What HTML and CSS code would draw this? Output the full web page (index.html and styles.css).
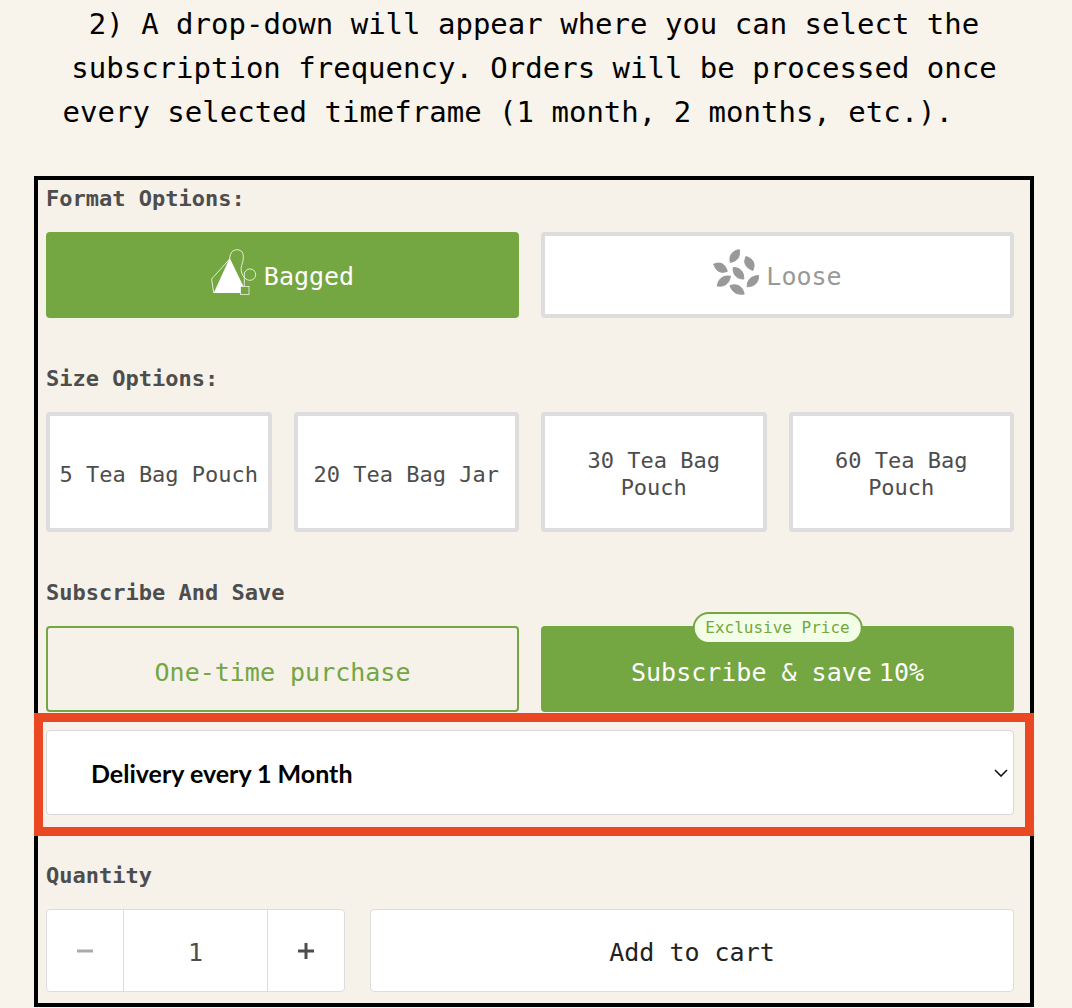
FILE: index.html
```html
<!DOCTYPE html>
<html lang="en">
<head>
    <meta charset="UTF-8">
    <meta name="viewport" content="width=device-width, initial-scale=1.0">
    <title>How to subscribe</title>
    <link rel="stylesheet" href="styles.css">
</head>
<body>
    <p class="intro">2) A drop-down will appear where you can select the subscription frequency. Orders will be processed once every selected timeframe (1 month, 2 months, etc.).&nbsp;&nbsp;&nbsp;</p>

    <form class="panel">
        <section class="group">
            <h2 class="label">Format Options:</h2>
            <div class="row">
                <button type="button" class="option format active" aria-pressed="true">
                    <svg class="icon" viewBox="0 0 46 46" aria-hidden="true">
                        <path d="M18.7 9L2.7 44H30V37.5H32.5Z" fill="currentColor"/>
                        <path d="M18.7 10L.6 30L2.7 44M18.7 10C19 3 22 .8 26 .8C31 .8 32.5 4 32.3 9C32 15 29 18 30.5 23C32 28 35 31.3 39 31.3A5.7 5.7 0 1 0 33.3 25.6V37.5" fill="none" stroke="currentColor" stroke-width=".8"/>
                        <rect x="29.5" y="37.5" width="8.5" height="8" fill="#74a642" stroke="currentColor" stroke-width=".7"/>
                    </svg>
                    <span>Bagged</span>
                </button>
                <button type="button" class="option format muted" aria-pressed="false">
                    <svg class="icon" viewBox="0 0 46 46" fill="currentColor" stroke="currentColor" stroke-linejoin="round" aria-hidden="true">
                        <path d="M26.3 .7C20 1.5 15.5 6 17.3 13.3C24 12.5 27.5 8 26.3 .7Z"/>
                        <path d="M33 7.5C40 9.5 43 15 39.8 21.5C32.5 18.5 30 14 33 7.5Z"/>
                        <path d="M.7 15.2C7 12.5 12 14.5 14.3 22.3C7.5 25 3 22 .7 15.2Z"/>
                        <path d="M20.2 18.5C27 18.5 31 22.5 30.8 30C24 30 19.5 26 20.2 18.5Z"/>
                        <path d="M17.5 27.3C11 26 5.5 29 4.2 37C11.5 38 16 35 17.5 27.3Z"/>
                        <path d="M45.4 26.5C38.5 27 34 30.5 34.2 37.8C41.5 37.5 46 33.5 45.4 26.5Z"/>
                        <path d="M17 36.5C24 34.5 29.5 37 31.2 45C24.5 46 19.5 44 17 36.5Z"/>
                    </svg>
                    <span>Loose</span>
                </button>
            </div>
        </section>

        <section class="group">
            <h2 class="label">Size Options:</h2>
            <div class="row">
                <button type="button" class="option size">5 Tea Bag Pouch</button>
                <button type="button" class="option size">20 Tea Bag Jar</button>
                <button type="button" class="option size">30 Tea Bag Pouch</button>
                <button type="button" class="option size">60 Tea Bag Pouch</button>
            </div>
        </section>

        <section class="group">
            <h2 class="label">Subscribe And Save</h2>
            <div class="row">
                <button type="button" class="option plan">One-time purchase</button>
                <button type="button" class="option plan active">
                    <span class="badge">Exclusive Price</span>
                    <span>Subscribe &amp; save</span>
                    <span>10%</span>
                </button>
            </div>
        </section>

        <div class="highlight">
            <div class="select-wrap">
                <select class="frequency" aria-label="Delivery frequency">
                    <option>Delivery every 1 Month</option>
                    <option>Delivery every 2 Months</option>
                    <option>Delivery every 3 Months</option>
                </select>
                <svg class="chevron" viewBox="0 0 14 8" aria-hidden="true">
                    <path d="M1 1L7 7L13 1" fill="none" stroke="currentColor" stroke-width="1.6"/>
                </svg>
            </div>
        </div>

        <section>
            <label class="label" for="quantity">Quantity</label>
            <div class="buy">
                <div class="stepper">
                    <button type="button" class="step minus" aria-label="Decrease">
                        <svg viewBox="0 0 16 16" aria-hidden="true"><path d="M0 8H16" stroke="currentColor" stroke-width="3"/></svg>
                    </button>
                    <input id="quantity" class="count" type="text" inputmode="numeric" value="1">
                    <button type="button" class="step" aria-label="Increase">
                        <svg viewBox="0 0 16 16" aria-hidden="true"><path d="M0 8H16M8 0V16" stroke="currentColor" stroke-width="3"/></svg>
                    </button>
                </div>
                <button type="button" class="cart">Add to cart</button>
            </div>
        </section>
    </form>
</body>
</html>
```
FILE: styles.css
```css
* {
    box-sizing: border-box;
}
body {
    margin: 0;
    padding: 2px 38px 0 34px;
    background-color: #f8f3eb;
    color: #000;
    font-family: "DejaVu Sans Mono", monospace;
}
button, input {
    margin: 0;
    padding: 0;
    font-family: inherit;
    color: inherit;
}
button {
    cursor: pointer;
}
.intro {
    margin: 0 0 42px;
    font-size: 29px;
    line-height: 44px;
    text-align: center;
}
.panel {
    padding: 5px 16px 11px 8px;
    border: 4px solid #000;
    background-color: #f6f1e9;
    color: #4d4d4d;
}
.group {
    margin-bottom: 47px;
}
.label {
    display: block;
    margin: 0 0 19px;
    font-size: 22px;
    font-weight: bold;
    line-height: 28px;
}
.row {
    display: flex;
    gap: 22px;
}
.option {
    flex: 1 1 0;
    display: flex;
    justify-content: center;
    align-items: center;
    gap: 7px;
    min-width: 0;
    padding: 4px 8px 0;
    border: 4px solid #ddd;
    border-radius: 4px;
    background-color: #fff;
}
.format, .plan {
    height: 86px;
    font-size: 25px;
    line-height: 32px;
}
.size {
    height: 120px;
    font-size: 22px;
    line-height: 27px;
}
.plan {
    position: relative;
    padding-top: 8px;
    border: 2px solid #74a642;
    background-color: transparent;
    color: #74a642;
}
.active {
    border-color: #74a642;
    background-color: #74a642;
    color: #fff;
}
.muted {
    color: #999;
}
.icon {
    width: 46px;
    height: 46px;
    margin-bottom: 11px;
}
.badge {
    position: absolute;
    top: -16px;
    left: 50%;
    transform: translateX(-50%);
    padding: 0 11px;
    border: 2px solid #74a642;
    border-radius: 16px;
    background-color: #f2ffe6;
    color: #74a642;
    font-size: 16px;
    line-height: 28px;
    white-space: nowrap;
}
/* spans the panel edge to edge, over its black border */
.highlight {
    margin: -46px -20px 26px -12px;
    padding: 8px 11px 12px 3px;
    border: 9px solid #e94822;
}
.select-wrap {
    position: relative;
}
.frequency {
    display: block;
    width: 100%;
    height: 85px;
    padding: 0 44px;
    border: 1px solid #d9d9d9;
    border-radius: 4px;
    background-color: #fff;
    color: #000;
    font-family: Lato, sans-serif;
    font-size: 25px;
    font-weight: bold;
    appearance: none;
}
.chevron {
    position: absolute;
    top: 50%;
    right: 6px;
    width: 14px;
    height: 8px;
    margin-top: -4px;
    color: #111;
    pointer-events: none;
}
.buy {
    display: flex;
    gap: 25px;
    height: 83px;
}
.stepper {
    flex: 0 0 299px;
    display: flex;
    border: 1px solid #ddd;
    border-radius: 4px;
    background-color: #fff;
    overflow: hidden;
}
.step {
    flex: 0 0 76px;
    display: flex;
    justify-content: center;
    align-items: center;
    border: none;
    background: none;
}
.step svg {
    width: 16px;
    height: 16px;
}
.minus {
    color: #aaa;
}
.count, .cart {
    padding-top: 4px;
    font-size: 25px;
}
.count {
    flex: 1;
    min-width: 0;
    border: solid #ddd;
    border-width: 0 1px;
    text-align: center;
}
.cart {
    flex: 1;
    border: 1px solid #ddd;
    border-radius: 4px;
    background-color: #fff;
    color: #222;
}
```
